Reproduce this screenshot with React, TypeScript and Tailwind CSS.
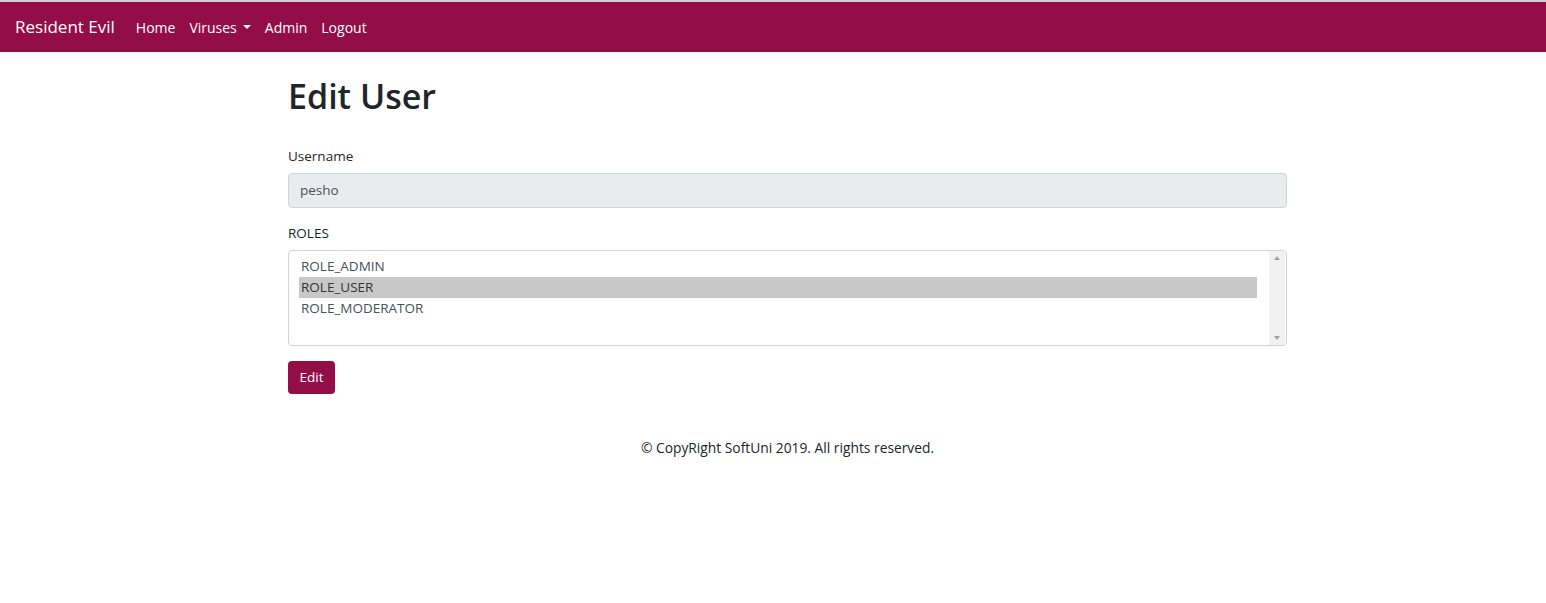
import React from "react";

export default function App() {
  const roles = ["ROLE_ADMIN", "ROLE_USER", "ROLE_MODERATOR"];
  return (
    <div className="min-h-[603px] bg-white text-[#212529]" style={{ fontFamily: '"Open Sans", "Noto Sans", sans-serif' }}>
      <div className="h-[2px] bg-[#d9cbd1]" />
      <nav className="h-[50px] bg-[#930d46] flex items-center px-[15px]">
        <span className="text-white text-[17px] mr-[14px]">Resident Evil</span>
        <div className="flex items-center text-[14px] text-white">
          <a className="px-[7px]">Home</a>
          <a className="px-[7px] flex items-center">
            Viruses
            <span className="ml-[6px] inline-block w-0 h-0 border-l-[4px] border-r-[4px] border-t-[4px] border-l-transparent border-r-transparent border-t-white" />
          </a>
          <a className="px-[7px]">Admin</a>
          <a className="px-[7px]">Logout</a>
        </div>
      </nav>
      <main className="ml-[288px] w-[999px] text-[13.5px]">
        <h1 className="mt-[23px] text-[34px] leading-[43px] font-semibold">Edit User</h1>
        <div className="mt-[28px]">
          <label className="block leading-[21px]">Username</label>
          <div className="mt-[6px] h-[35px] rounded-[4px] border border-[#ced4da] bg-[#e9ecef] px-[11px] flex items-center text-[#495057]">
            pesho
          </div>
        </div>
        <div className="mt-[15px]">
          <label className="block leading-[21px]">ROLES</label>
          <div className="mt-[6px] h-[96px] rounded-[4px] border border-[#ced4da] bg-white flex">
            <div className="flex-1 pl-[10px] pr-[12px] pt-[5px] text-[#495057]">
              {roles.map((r, i) => (
                <div key={r} className={"h-[21px] leading-[21px] px-[2px] " + (i === 1 ? "bg-[#c8c8c8] text-[#333]" : "")}>
                  {r}
                </div>
              ))}
            </div>
            <div className="w-[16px] bg-[#f1f1f1] flex flex-col justify-between items-center py-[5px] mr-[1px]">
              <span className="w-0 h-0 border-l-[3.5px] border-r-[3.5px] border-b-[4px] border-l-transparent border-r-transparent border-b-[#a3a3a3]" />
              <span className="w-0 h-0 border-l-[3.5px] border-r-[3.5px] border-t-[4px] border-l-transparent border-r-transparent border-t-[#a3a3a3]" />
            </div>
          </div>
        </div>
        <button className="mt-[15px] h-[33px] w-[47px] rounded-[4px] bg-[#930d46] text-white text-[13.5px]">Edit</button>
        <footer className="mt-[44px] text-center text-[13.8px]">© CopyRight SoftUni 2019. All rights reserved.</footer>
      </main>
    </div>
  );
}
